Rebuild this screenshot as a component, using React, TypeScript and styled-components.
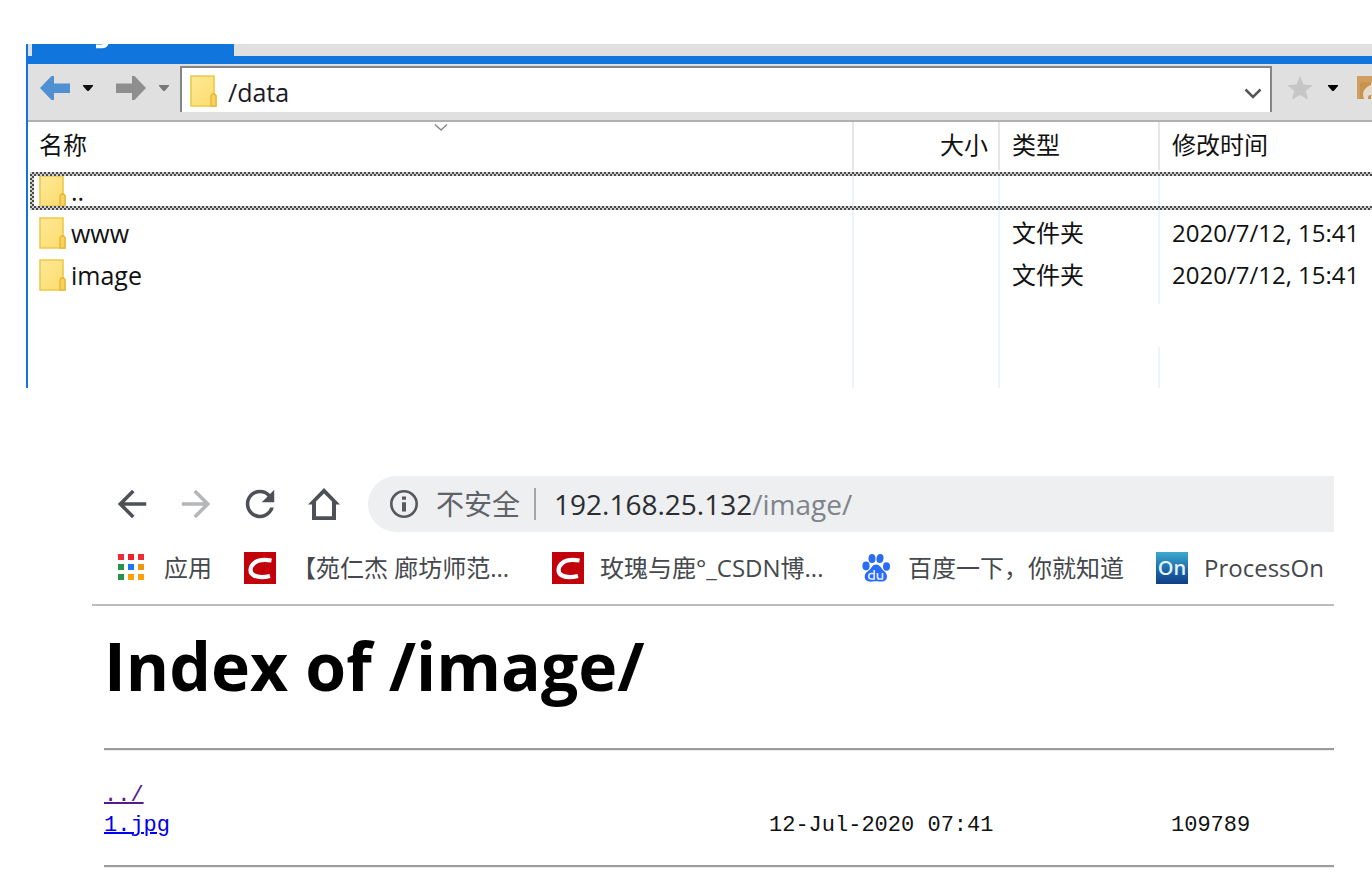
import React from "react";
import styled, { createGlobalStyle, css } from "styled-components";

const Global = createGlobalStyle`
  *, *::before, *::after { box-sizing: border-box; }
  body {
    margin: 0;
    background: #fff;
    color: #111;
    font-family: "Open Sans", "Noto Sans CJK SC", sans-serif;
    font-size: 24px;
    overflow-x: hidden;
  }
  button { margin: 0; padding: 0; border: 0; background: none; font: inherit; color: inherit; }
  svg { display: block; flex: none; }
`;

const Page = styled.main`
  display: flex;
  flex-direction: column;
  gap: 88px;
  padding-top: 44px;
`;

/* ---------- File manager ---------- */

const FileManager = styled.section`
  margin-left: 26px;
  border-left: 2px solid #1075dc;
  overflow: hidden;
`;

const TabStrip = styled.div`
  display: flex;
  height: 20px;
  padding-left: 4px;
  background: #e0e0e0;
  border-bottom: 8px solid #1075dc;
`;

const Tab = styled.button`
  display: flex;
  align-items: flex-start;
  width: 202px;
  height: 12px;
  padding-left: 62px;
  background: #1075dc;
`;

const Toolbar = styled.div`
  display: flex;
  align-items: flex-start;
  height: 58px;
  padding: 2px 0 0 12px;
  background: #e0e0e0;
  border-bottom: 2px solid #b0b0b0;
`;

const History = styled.div`
  display: flex;
  align-items: center;
  gap: 12px;
  height: 44px;
  margin-right: 22px;
  &:nth-child(2) { margin-right: 10px; }
`;

const PathBox = styled.div`
  display: flex;
  align-items: center;
  flex: 1;
  min-width: 0;
  height: 46px;
  padding: 2px 8px 0 8px;
  background: #fff;
  border: 2px solid #858585;
  border-bottom: 0;
`;

const PathInput = styled.input`
  flex: 1;
  min-width: 0;
  height: 40px;
  padding: 2px 0 0;
  margin-left: 11px;
  border: 0;
  outline: 0;
  background: none;
  color: #1a1a2a;
  font: inherit;
  font-size: 25px;
`;

const PathMenu = styled.button`
  padding-top: 4px;
`;

const Favourites = styled.div`
  display: flex;
  align-items: center;
  gap: 16px;
  flex: none;
  width: 100px;
  height: 44px;
  padding-left: 15px;
  overflow: hidden;
  & > :nth-child(2) { margin-left: -2px; }
  & > :last-child { margin-left: 2px; }
`;

const FileTable = styled.table`
  width: 100%;
  table-layout: fixed;
  border-collapse: separate;
  border-spacing: 0;
`;

const cell = css<{ $plain?: boolean }>`
  padding: 0 10px;
  border-right: 2px solid ${(p) => (p.$plain ? "transparent" : "#ebf3fd")};
  white-space: nowrap;
  text-align: left;
  font-weight: 400;
  line-height: 32px;
  &:first-child { padding: 0 11px; }
  &:nth-child(3) { padding-left: 12px; }
  &:last-child { border-right: 0; padding-left: 12px; }
`;

const Th = styled.th<{ $right?: boolean }>`
  ${cell}
  position: relative;
  height: 48px;
  border-right-color: #e6e6e6;
  &, &:first-child { padding-bottom: 2px; }
  ${(p) => p.$right && "text-align: right;"}
`;

const SortMark = styled.span`
  position: absolute;
  top: 1px;
  left: 50%;
  margin-left: -6px;
`;

const Td = styled.td<{ $plain?: boolean }>`
  ${cell}
`;

const Row = styled.tr<{ $height: number }>`
  position: relative;
  height: ${(p) => p.$height}px;
`;

const Focus = styled.span`
  position: absolute;
  inset: 2px 0 2px 2px;
  pointer-events: none;
  background: repeating-conic-gradient(#484848 0 25%, #d0d0d0 0 50%) 0 0 / 4px 4px;
  clip-path: polygon(0 0, 100% 0, 100% 4px, 4px 4px, 4px calc(100% - 4px), 100% calc(100% - 4px), 100% 100%, 0 100%);
`;

const NameCell = styled.div`
  display: flex;
  align-items: center;
  gap: 5px;
  font-size: 25px;
  line-height: 32px;
`;

/* ---------- Browser ---------- */

const Browser = styled.section`
  margin: 0 38px 0 92px;
`;

const NavBar = styled.div`
  display: flex;
  align-items: center;
  gap: 32px;
  height: 56px;
  padding-left: 24px;
  color: #4d5156;
`;

const IconButton = styled.button<{ $dim?: boolean }>`
  flex: none;
  color: ${(p) => (p.$dim ? "#b4b6b8" : "inherit")};
`;

const Omnibox = styled.div`
  display: flex;
  align-items: center;
  flex: 1;
  height: 56px;
  margin-left: -4px;
  padding-left: 22px;
  border-radius: 28px 0 0 28px;
  background: #edeff1;
  font-size: 28px;
  line-height: 40px;
  white-space: nowrap;
`;

const Warning = styled.button`
  display: flex;
  align-items: center;
  gap: 18px;
  padding-right: 14px;
  color: #5f6368;
`;

const Url = styled.div`
  padding-left: 18px;
  border-left: 2px solid #a4a7aa;
  line-height: 32px;
  font-weight: 500;
  color: #2b2d31;
`;

const UrlPath = styled.span`
  color: #80848a;
`;

const Bookmarks = styled.nav`
  display: flex;
  align-items: center;
  gap: 32px;
  height: 74px;
  padding-left: 24px;
  border-bottom: 2px solid #bcbcbc;
`;

const Bookmark = styled.a<{ $width?: number }>`
  display: flex;
  align-items: center;
  gap: 16px;
  width: ${(p) => (p.$width ? `${p.$width}px` : "auto")};
  color: #45484c;
  text-decoration: none;
  white-space: nowrap;
  line-height: 32px;
`;

const Listing = styled.article`
  padding: 17px 0 0 12px;
`;

const Title = styled.h1`
  margin: 0 0 41px;
  color: #000;
  font-size: 66px;
  line-height: 84px;
  font-weight: 700;
`;

const Rule = styled.hr`
  height: 3px;
  margin: 0;
  border: 0;
  border-top: 2px solid #9c9c9c;
  border-bottom: 1px solid #ececec;
`;

const Index = styled.table`
  width: 100%;
  margin: 30px 0 24px;
  border-collapse: collapse;
  table-layout: fixed;
  font-family: "Liberation Mono", monospace;
  font-size: 22px;
  line-height: 30px;
  color: #111;
  td { padding: 0; }
`;

const FileLink = styled.a<{ $visited?: boolean }>`
  color: ${(p) => (p.$visited ? "#551a8b" : "#0000ee")};
  text-decoration: underline;
  text-decoration-thickness: 2px;
`;

/* ---------- Icons ---------- */

const TabMark = () => (
  <svg width="16" height="5" viewBox="0 0 16 5">
    <path d="M14.500 0L13 2.500Q11.500 4.300 8.500 4.300H2V0.500H8L9 0Z" fill="#fff" />
  </svg>
);

const FolderArrow = ({ color, flip }: { color: string; flip?: boolean }) => (
  <svg width="30" height="26" viewBox="0 0 30 26">
    <path
      fill={color}
      d={flip ? "M0 8.500H16V1H18.500L30 13L18.500 25H16V18H0Z" : "M30 8.500H14V1H11.500L0 13L11.500 25H14V18H30Z"}
    />
  </svg>
);

const Caret = ({ color }: { color: string }) => (
  <svg width="12" height="8" viewBox="0 0 12 8">
    <path d="M1 1H11V2L6.700 7H5.300L1 2Z" fill={color} />
  </svg>
);

const Chevron = ({ w, color, stroke }: { w: number; color: string; stroke: number }) => (
  <svg width={w} height={w === 14 ? 9 : 12} viewBox={w === 14 ? "0 0 14 9" : "0 0 18 12"}>
    <path
      d={w === 14 ? "M1 1.500L7 7L13 1.500" : "M1.500 2.500L9 10L16.500 2.500"}
      fill="none"
      stroke={color}
      strokeWidth={stroke}
    />
  </svg>
);

const Folder = () => (
  <svg width="27" height="32" viewBox="0 0 27 32">
    <defs>
      <linearGradient id="folderFill" x1="0" y1="0" x2="1" y2="1">
        <stop offset="0" stopColor="#ffe996" />
        <stop offset="1" stopColor="#fbdb6c" />
      </linearGradient>
    </defs>
    <path d="M1 1H24V18.500L26 20.500V31H1Z" fill="url(#folderFill)" stroke="#ecc94b" strokeWidth="1.600" />
    <path d="M21 31V21L22.500 19H24.500L26 21V31Z" fill="#f7d35c" stroke="#e3b93c" strokeWidth="1.400" />
  </svg>
);

const Star = () => (
  <svg width="26" height="24" viewBox="0 0 26 24">
    <path
      d="M13 0L16.500 8.500L26 9.200L18.700 15L21 23.500L13 19L5 23.500L7.300 15L0 9.200L9.500 8.500Z"
      fill="#c6c6c6"
    />
  </svg>
);

const OpenFolder = () => (
  <svg width="28" height="26" viewBox="0 0 28 26">
    <path d="M0 1H28V24H0Z" fill="#c9924f" />
    <path d="M0 1H28V7H3V24H0Z" fill="#cf9f62" />
    <path d="M6 20C6 15 9 12 14 10V7L24 14L14 26V20C11 20 11 22 11 24H7Z" fill="#e6dccd" />
  </svg>
);

const BrowserArrow = ({ flip }: { flip?: boolean }) => (
  <svg width="32" height="32" viewBox="3 3 18 18" fill="currentColor">
    <path
      d={
        flip
          ? "M12 4L10.590 5.410L16.170 11H4V13H16.170L10.590 18.590L12 20L20 12Z"
          : "M20 11H7.830L13.420 5.410L12 4L4 12L12 20L13.410 18.590L7.830 13H20Z"
      }
    />
  </svg>
);

const Reload = () => (
  <svg width="32" height="32" viewBox="3 3 18 18" fill="currentColor">
    <path d="M17.650 6.350C16.200 4.900 14.210 4 12 4c-4.420 0-7.990 3.580-7.990 8s3.570 8 7.990 8c3.730 0 6.840-2.550 7.730-6h-2.080c-.82 2.330-3.040 4-5.650 4-3.310 0-6-2.690-6-6s2.690-6 6-6c1.660 0 3.140.69 4.220 1.780L13 11h7V4l-2.350 2.350z" />
  </svg>
);

const Home = () => (
  <svg width="32" height="32" viewBox="0 0 32 32" fill="currentColor">
    <path fillRule="evenodd" d="M16 0L32 16.500H28V32H4V16.500H0ZM16 5.600L8 13.500V28.200H24V13.500Z" />
  </svg>
);

const Info = () => (
  <svg width="28" height="28" viewBox="0 0 28 28">
    <circle cx="14" cy="14" r="12.700" fill="none" stroke="#55595e" strokeWidth="2.600" />
    <path d="M12 6.500H16V9.800H12ZM12 12.300H16V21.500H12Z" fill="#55595e" />
  </svg>
);

const appColors = [
  "#ee2b36", "#ee1f2d", "#ee2b36",
  "#2a9348", "#1f76f2", "#ee960c",
  "#2a9348", "#fba20a", "#fba20a",
];

const Apps = () => (
  <svg width="32" height="32" viewBox="0 0 32 32">
    {appColors.map((c, i) => (
      <rect key={i} x={2 + (i % 3) * 10} y={2 + Math.floor(i / 3) * 10} width="6" height="6" fill={c} />
    ))}
  </svg>
);

const Csdn = () => (
  <svg width="32" height="32" viewBox="0 0 32 32">
    <rect width="32" height="32" fill="#c2020b" />
    <path
      d="M27.500 8.500C21 7.500 15 7.500 11 10.500C5.500 14.500 5 21 10 23.500C14 25.500 20 25.500 26 24"
      fill="none"
      stroke="#fff"
      strokeWidth="4.200"
    />
  </svg>
);

const Baidu = () => (
  <svg width="32" height="32" viewBox="0 0 32 32">
    <g fill="#2a6cf5">
      <ellipse cx="6" cy="14" rx="3.600" ry="4.400" />
      <ellipse cx="12" cy="6.500" rx="3.500" ry="4.500" />
      <ellipse cx="20" cy="6.500" rx="3.500" ry="4.500" transform="rotate(10 20 6.500)" />
      <ellipse cx="26.500" cy="14.500" rx="3.500" ry="4.200" />
      <path d="M16.500 12.500C20 12.500 21 16.500 24 19C29 23 27.500 29.500 22 29.500C19 29.500 17 29 14 29.300C8 30.500 4 28.500 4.800 23.500C5.400 20 9.500 18.500 11.300 15.700C12.500 13.700 14 12.500 16.500 12.500Z" />
    </g>
    <g fill="none" stroke="#dce8ff" strokeWidth="1.700">
      <path d="M14.200 18V27H11.500C7.800 27 7.800 21.500 11.500 21.500H14.200M17.500 21V25C17.500 26.500 18.200 27 19.500 27H22.500V21" />
    </g>
  </svg>
);

const OnBadge = styled.span`
  display: flex;
  align-items: center;
  justify-content: center;
  width: 32px;
  height: 32px;
  background: linear-gradient(#3cabd0, #1a62a4 60%, #123e86);
  color: #e4f3fb;
  font-size: 20px;
  line-height: 32px;
  font-weight: 600;
`;

/* ---------- Content ---------- */

const files = [
  { name: "..", type: "", time: "" },
  { name: "www", type: "文件夹", time: "2020/7/12, 15:41" },
  { name: "image", type: "文件夹", time: "2020/7/12, 15:41" },
];

const emptyRows = [
  { height: 8, plain: false },
  { height: 43, plain: true },
  { height: 41, plain: false },
];

export default function App() {
  return (
    <>
      <Global />
      <Page>
        <FileManager>
          <TabStrip>
            <Tab type="button" aria-label="Session"><TabMark /></Tab>
          </TabStrip>
          <Toolbar>
            <History>
              <button type="button" aria-label="Back"><FolderArrow color="#5090d0" /></button>
              <button type="button" aria-label="Back history"><Caret color="#111" /></button>
            </History>
            <History>
              <button type="button" aria-label="Forward"><FolderArrow color="#8e8e8e" flip /></button>
              <button type="button" aria-label="Forward history"><Caret color="#777" /></button>
            </History>
            <PathBox>
              <Folder />
              <PathInput aria-label="Path" defaultValue="/data" />
              <PathMenu type="button" aria-label="Show paths"><Chevron w={18} color="#555" stroke={2.5} /></PathMenu>
            </PathBox>
            <Favourites>
              <button type="button" aria-label="Bookmark"><Star /></button>
              <button type="button" aria-label="Bookmarks"><Caret color="#000" /></button>
              <button type="button" aria-label="Open folder"><OpenFolder /></button>
            </Favourites>
          </Toolbar>
          <FileTable>
            <colgroup>
              <col />
              <col style={{ width: 146 }} />
              <col style={{ width: 160 }} />
              <col style={{ width: 212 }} />
            </colgroup>
            <thead>
              <tr>
                <Th scope="col">
                  名称
                  <SortMark><Chevron w={14} color="#888" stroke={1.5} /></SortMark>
                </Th>
                <Th scope="col" $right>大小</Th>
                <Th scope="col">类型</Th>
                <Th scope="col">修改时间</Th>
              </tr>
            </thead>
            <tbody>
              {files.map((f, i) => (
                <Row key={f.name} $height={42}>
                  <Td>
                    <NameCell><Folder />{f.name}</NameCell>
                    {i === 0 && <Focus />}
                  </Td>
                  <Td />
                  <Td>{f.type}</Td>
                  <Td>{f.time}</Td>
                </Row>
              ))}
              {emptyRows.map((r) => (
                <Row key={r.height} $height={r.height}>
                  <Td />
                  <Td />
                  <Td $plain={r.plain} />
                  <Td />
                </Row>
              ))}
            </tbody>
          </FileTable>
        </FileManager>

        <Browser>
          <NavBar>
            <IconButton type="button" aria-label="Back"><BrowserArrow /></IconButton>
            <IconButton type="button" aria-label="Forward" $dim><BrowserArrow flip /></IconButton>
            <IconButton type="button" aria-label="Reload"><Reload /></IconButton>
            <IconButton type="button" aria-label="Home"><Home /></IconButton>
            <Omnibox>
              <Warning type="button"><Info />不安全</Warning>
              <Url>192.168.25.132<UrlPath>/image/</UrlPath></Url>
            </Omnibox>
          </NavBar>
          <Bookmarks>
            <Bookmark href="#"><Apps />应用</Bookmark>
            <Bookmark href="#" $width={276}><Csdn />【苑仁杰 廊坊师范...</Bookmark>
            <Bookmark href="#" $width={276}><Csdn />玫瑰与鹿°_CSDN博...</Bookmark>
            <Bookmark href="#"><Baidu />百度一下，你就知道</Bookmark>
            <Bookmark href="#"><OnBadge>On</OnBadge>ProcessOn</Bookmark>
          </Bookmarks>
          <Listing>
            <Title>Index of /image/</Title>
            <Rule />
            <Index>
              <colgroup>
                <col />
                <col style={{ width: 402 }} />
                <col style={{ width: 163 }} />
              </colgroup>
              <tbody>
                <tr>
                  <td><FileLink href="#" $visited>../</FileLink></td>
                  <td />
                  <td />
                </tr>
                <tr>
                  <td><FileLink href="#">1.jpg</FileLink></td>
                  <td>12-Jul-2020 07:41</td>
                  <td>109789</td>
                </tr>
              </tbody>
            </Index>
            <Rule />
          </Listing>
        </Browser>
      </Page>
    </>
  );
}
